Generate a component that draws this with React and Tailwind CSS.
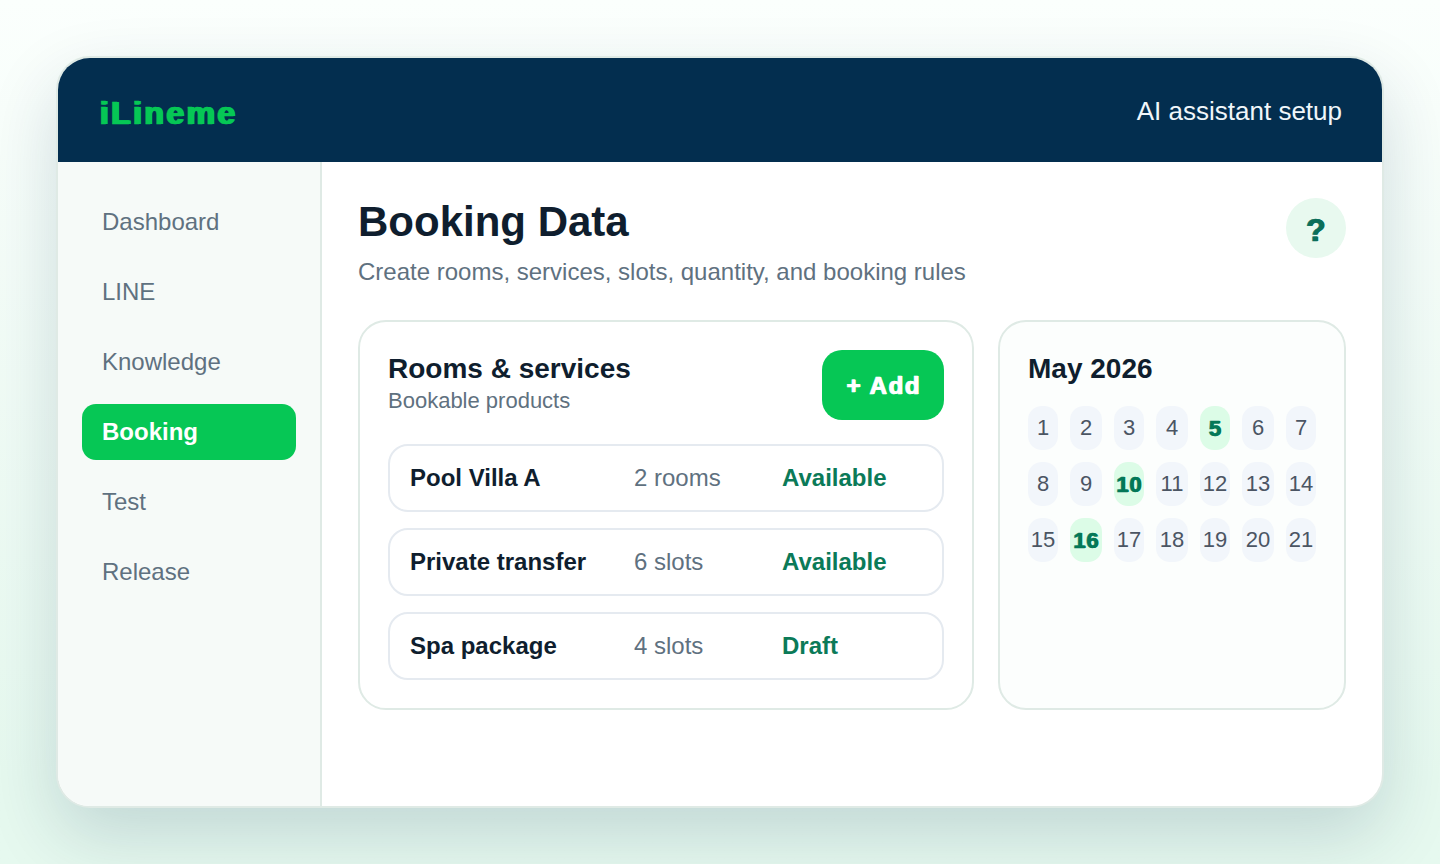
const nav = ["Dashboard", "LINE", "Knowledge", "Booking", "Test", "Release"];
const rows = [
  ["Pool Villa A", "2 rooms", "Available"],
  ["Private transfer", "6 slots", "Available"],
  ["Spa package", "4 slots", "Draft"],
];
const days = Array.from({ length: 21 }, (_, i) => i + 1);
const marked = [5, 10, 16];

export default function App() {
  return (
    <div className="h-[864px] overflow-hidden bg-gradient-to-b from-[#fbfffd] to-[#e6f9ef] to-90% p-14 font-['Liberation_Sans',Arial,sans-serif]">
      <div className="flex h-[752px] flex-col overflow-hidden rounded-[34px] border-2 border-[#dfeae5] bg-white shadow-[0_28px_70px_rgba(3,46,79,0.16)]">
        <header className="flex h-[104px] shrink-0 items-center justify-between bg-[#032e4f] px-10">
          <div className="pl-[1px] pt-[5px] text-[32px] font-black tracking-[2.4px] text-[#06c755] [-webkit-text-stroke:0.4px_#06c755] [text-shadow:1px_0_0_#06c755,2px_0_0_#06c755]">iLineme</div>
          <div className="pt-[2px] text-[26px] text-[#f0f6fa]">AI assistant setup</div>
        </header>
        <div className="flex min-h-0 flex-1">
          <aside className="flex w-[264px] shrink-0 flex-col gap-[14px] border-r-2 border-[#dfeae5] bg-[#f6faf8] px-6 pt-8">
            {nav.map((n) => (
              <div
                key={n}
                className={
                  n === "Booking"
                    ? "flex h-14 items-center rounded-[14px] bg-[#06c755] px-5 text-2xl font-bold text-white"
                    : "flex h-14 items-center rounded-[14px] px-5 text-2xl text-[#5f7180]"
                }
              >
                {n}
              </div>
            ))}
          </aside>
          <main className="min-w-0 flex-1 px-9 pt-9">
            <div className="flex items-start justify-between">
              <div>
                <h1 className="text-[42px] leading-[48px] font-bold text-[#0f1e2e]">Booking Data</h1>
                <p className="mt-3 text-2xl leading-7 text-[#5f7180]">Create rooms, services, slots, quantity, and booking rules</p>
              </div>
              <div className="flex h-[60px] w-[60px] items-center justify-center rounded-full bg-[#e8f9ef] pt-[4px] pr-[1px] text-[32px] font-black text-[#0b6e59] [-webkit-text-stroke:0.6px_#0b6e59] [text-shadow:1px_0_0_#0b6e59]">?</div>
            </div>
            <div className="mt-[34px] grid grid-cols-[616px_348px] gap-6">
              <section className="h-[390px] rounded-[28px] border-2 border-[#dfeae5] bg-white p-7">
                <div className="flex items-start justify-between">
                  <div className="pt-[3px]">
                    <div className="text-[28px] leading-8 font-bold text-[#0f1e2e]">Rooms &amp; services</div>
                    <div className="mt-1 text-[22px] leading-6 text-[#5f7180]">Bookable products</div>
                  </div>
                  <button className="h-[70px] w-[122px] rounded-[20px] bg-[#06c755] pt-[2px] pl-[1px] text-2xl font-black tracking-[1.6px] text-white [-webkit-text-stroke:0.6px_#fff] [text-shadow:1px_0_0_#fff]">+ Add</button>
                </div>
                <div className="mt-6 flex flex-col gap-4">
                  {rows.map((r) => (
                    <div key={r[0]} className="grid h-[68px] grid-cols-[224px_148px_1fr] items-center rounded-[20px] border-2 border-[#e5eaf0] px-5 text-2xl">
                      <div className="font-bold text-[#0f1e2e]">{r[0]}</div>
                      <div className="text-[#5f7180]">{r[1]}</div>
                      <div className="font-bold text-[#0b7a58]">{r[2]}</div>
                    </div>
                  ))}
                </div>
              </section>
              <section className="h-[390px] rounded-[28px] border-2 border-[#dfeae5] bg-[#fcfefd] p-7">
                <div className="pt-[3px] text-[28px] leading-8 font-bold text-[#0f1e2e]">May 2026</div>
                <div className="mt-[21px] grid grid-cols-[30px_32px_30px_32px_30px_32px_30px] gap-3">
                  {days.map((d) =>
                    marked.includes(d) ? (
                      <div key={d} className="flex h-11 items-center justify-center rounded-[14px] bg-[#dcfce7] pt-[1px] text-[22px] font-black tracking-[0.8px] text-[#047857] [-webkit-text-stroke:0.4px_#047857] [text-shadow:1px_0_0_#047857]">{d}</div>
                    ) : (
                      <div key={d} className="flex h-11 items-center justify-center rounded-[14px] bg-[#f2f6fb] pb-[2px] text-[22px] text-[#4b5563]">{d}</div>
                    )
                  )}
                </div>
              </section>
            </div>
          </main>
        </div>
      </div>
    </div>
  );
}
